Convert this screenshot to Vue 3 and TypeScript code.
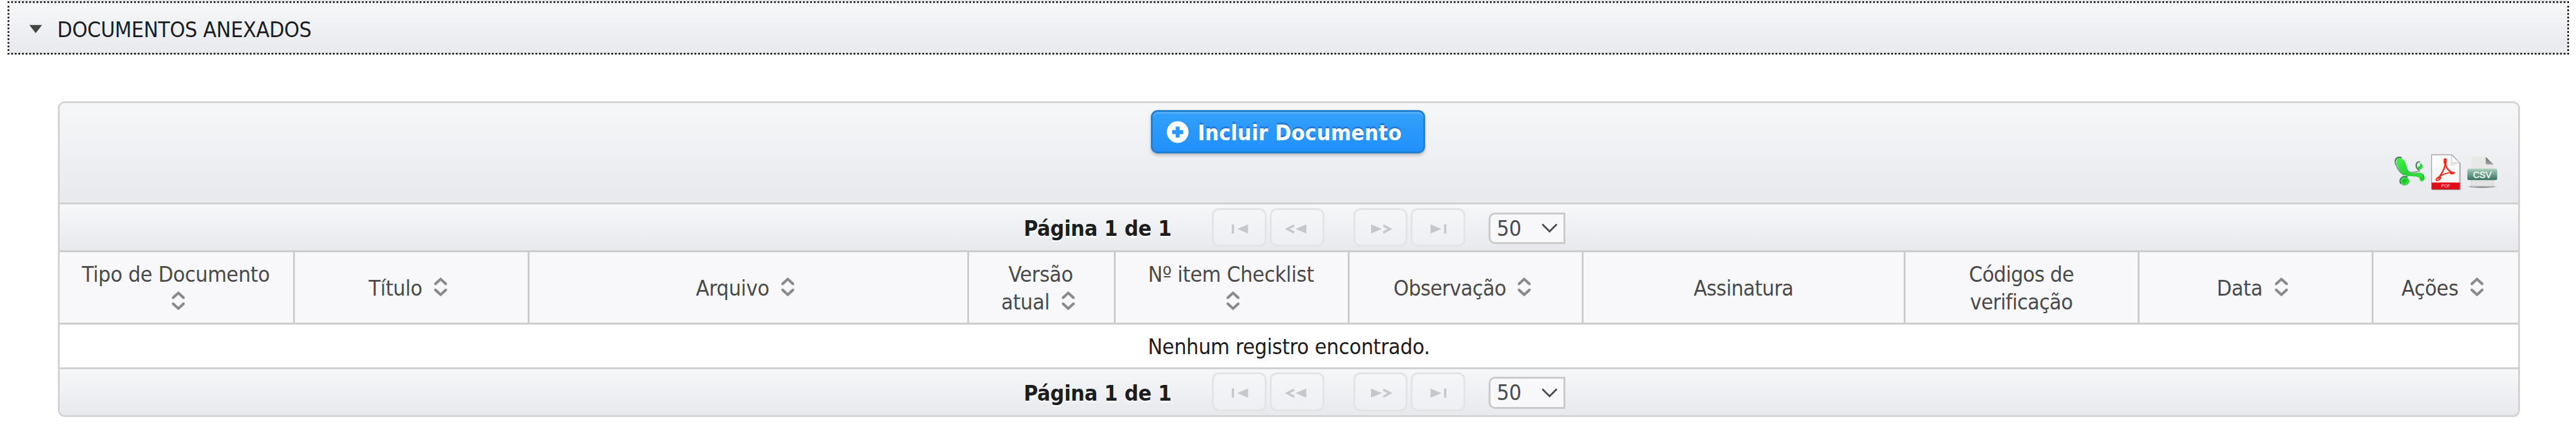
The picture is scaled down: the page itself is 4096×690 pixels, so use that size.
<script setup lang="ts">
interface Column {
  lines: string[]
  sortable: boolean
  width: number
  tight?: boolean
}

const columns: Column[] = [
  { lines: ['Tipo de Documento', ''], sortable: true, width: 520 },
  { lines: ['Título'], sortable: true, width: 520 },
  { lines: ['Arquivo'], sortable: true, width: 972 },
  { lines: ['Versão', 'atual'], sortable: true, width: 324 },
  { lines: ['Nº item Checklist', ''], sortable: true, width: 518 },
  { lines: ['Observação'], sortable: true, width: 518, tight: true },
  { lines: ['Assinatura'], sortable: false, width: 712, tight: true },
  { lines: ['Códigos de', 'verificação'], sortable: false, width: 518, tight: true },
  { lines: ['Data'], sortable: true, width: 518 },
  { lines: ['Ações'], sortable: true, width: 320 },
]

const columnTracks = columns.map((c) => `minmax(0, ${c.width}fr)`).join(' ')

const pagers = ['top', 'bottom']
</script>

<template>
  <div class="page">
    <div class="previous-panel"></div>
    <div class="panel-header">
      <svg class="caret" viewBox="0 0 30 20"><path d="M1 1H29L15 19Z" fill="#434343" /></svg>
      <span class="panel-title">DOCUMENTOS ANEXADOS</span>
      <svg class="focus-ring" viewBox="0 0 5668 118" preserveAspectRatio="none">
        <g stroke="#1c1c1c" stroke-width="4" stroke-dasharray="4 4" fill="none">
          <path d="M0 2H5668" />
          <path d="M0 116H5668" />
          <path d="M2 10V114" />
          <path d="M5666 10V114" />
        </g>
      </svg>
    </div>

    <div class="datatable">
      <div class="toolbar">
        <button class="include" type="button">
          <svg class="plus" viewBox="0 0 50 50">
            <path fill="#fff" fill-rule="evenodd" d="M25 0.5a24.5 24.5 0 1 1 0 49a24.5 24.5 0 1 1 0-49ZM20.5 12.5v8h-8v9h8v8h9v-8h8v-9h-8v-8Z" />
          </svg>
          <span>Incluir Documento</span>
        </button>
        <div class="exports">
          <svg viewBox="0 0 80 82">
            <defs>
              <linearGradient id="leaf" x1="0" y1="0" x2="1" y2="1">
                <stop offset="0" stop-color="#43f646" /><stop offset="0.5" stop-color="#27d034" /><stop offset="1" stop-color="#3bea4a" />
              </linearGradient>
            </defs>
            <g fill="none" stroke-linecap="round">
              <path d="M9 24C5 12 12 7 21 9" stroke="#3c7256" stroke-width="3" />
              <path d="M8 18C10 30 16 40 26 47" stroke="#6fa387" stroke-width="3" />
              <path d="M35 40C42 43 56 42 62 38" stroke="#8fa99a" stroke-width="3" />
              <path d="M60 36C51 31 53 19 61 18.5" stroke="#3f7d5b" stroke-width="3" />
              <path d="M34 52C21 49 16 59 20 66" stroke="#3f7d5b" stroke-width="3" />
              <path d="M21 66C25 72 34 71 38 64" stroke="#63b676" stroke-width="2" />
            </g>
            <path d="M12 12C20 8 28 13 31 22C34 32 35 40 43 43C51 45 60 41 66 43C73 46 75 57 70 61C65 64 60 60 62 55C56 49 44 51 35 50C24 49 17 39 13 28C10 20 10 15 12 12Z" fill="url(#leaf)" />
            <path d="M69 46C72 54 69 58 66 57C63 55 65 52 65 51" stroke="#189a35" stroke-width="1.5" fill="none" />
            <ellipse cx="29.5" cy="61" rx="9.5" ry="8.5" fill="url(#leaf)" />
            <circle cx="28" cy="60" r="4" fill="#1bbf2b" />
            <path d="M62 21C69 23 71 31 66 34.5C61 37 56 33 58 27C60 31 64 28 62 21Z" fill="url(#leaf)" />
          </svg>
          <svg viewBox="0 0 80 82">
            <defs>
              <linearGradient id="sheet" x1="0" y1="0" x2="0" y2="1">
                <stop offset="0" stop-color="#fff" /><stop offset="0.6" stop-color="#f6f6f6" /><stop offset="1" stop-color="#fff" />
              </linearGradient>
            </defs>
            <path d="M10 80.2H72.5V21" fill="none" stroke="#a7a7aa" stroke-width="1.4" />
            <path d="M9 3H54L71 21V79H9Z" fill="url(#sheet)" stroke="#98989a" stroke-width="1.6" />
            <path d="M52 8L50 22H68L58 26L50 27Z" fill="#e2e2e3" />
            <path d="M53 4V20.5H70.5Z" fill="#fdfdfd" stroke="#bcbcbe" stroke-width="1.3" />
            <g fill="none" stroke="#f12c1f" stroke-linecap="round" stroke-linejoin="round">
              <path d="M39 14V20" stroke-width="7" />
              <path d="M39 18C40 31 30 47 24 55" stroke-width="3.4" />
              <path d="M40 22C41 32 47 40 58 43" stroke-width="3.4" />
              <path d="M28 50C36 45 45 42 57 42" stroke-width="2.6" />
              <path d="M52 43.5L57.5 43" stroke-width="5.5" />
              <ellipse cx="24" cy="56" rx="5.5" ry="2.7" transform="rotate(-38 24 56)" stroke-width="3" />
            </g>
            <rect x="9" y="64.3" width="62.5" height="15" fill="#e30c18" />
            <path d="M9 79.3H71.5" stroke="#8e3a2c" stroke-width="1" />
            <text class="pdf-text" x="40.4" y="75.5">PDF</text>
          </svg>
          <svg viewBox="0 0 80 82">
            <defs>
              <linearGradient id="band" x1="0" y1="0" x2="0" y2="1">
                <stop offset="0" stop-color="#b3d6c2" /><stop offset="0.25" stop-color="#8ab9a5" /><stop offset="1" stop-color="#38705f" />
              </linearGradient>
              <linearGradient id="fold" x1="0" y1="0" x2="0" y2="1">
                <stop offset="0" stop-color="#6b6b6b" /><stop offset="1" stop-color="#a0a0a0" />
              </linearGradient>
              <radialGradient id="ground">
                <stop offset="0" stop-color="#6f6f72" /><stop offset="0.7" stop-color="#9a9a9d" /><stop offset="1" stop-color="#d5d6da" stop-opacity="0" />
              </radialGradient>
            </defs>
            <ellipse cx="40" cy="73.5" rx="36" ry="3.2" fill="url(#ground)" />
            <path d="M19 7H48L65 24V70Q65 73 62 73H18.5Q15.5 73 15.5 70V10.5Q15.5 7 19 7Z" fill="#e8e8e7" />
            <path d="M16 59H64.5V69Q64.5 72 62 72H18.5Q16 72 16 69Z" fill="#e3e3e4" stroke="#c7c7c9" stroke-width="1" />
            <path d="M48 7.5L65.5 24.5H51Q48 24.5 48 21.5Z" fill="url(#fold)" />
            <rect x="7.3" y="33.3" width="66" height="25.5" rx="4" fill="url(#band)" />
            <text class="csv-text" x="40.3" y="54">CSV</text>
          </svg>
        </div>
      </div>

      <template v-for="place in pagers" :key="place">
        <div class="pager">
          <span class="current">Página 1 de 1</span>
          <span class="nav">
            <svg viewBox="0 0 120 86"><path d="M44 36h5v20h-5ZM80 36v20L56 46Z" /></svg>
          </span>
          <span class="nav">
            <svg viewBox="0 0 120 86"><path d="M81 36v20L57 46Z" /><path class="stroke" d="M54 38L39 46L54 54" /></svg>
          </span>
          <span class="nav forward">
            <svg viewBox="0 0 120 86"><path d="M39 36v20L63 46Z" /><path class="stroke" d="M66 38L81 46L66 54" /></svg>
          </span>
          <span class="nav">
            <svg viewBox="0 0 120 86"><path d="M44 36v20L68 46ZM74 36h5v20h-5Z" /></svg>
          </span>
          <span class="rows-select">
            <span>50</span>
            <svg viewBox="0 0 36 22"><path d="M2 2L18 18L34 2" fill="none" stroke="#494949" stroke-width="4" /></svg>
          </span>
        </div>

        <template v-if="place === 'top'">
          <div class="head" :style="{ gridTemplateColumns: columnTracks }">
            <div v-for="col in columns" :key="col.lines[0]" class="cell" :class="{ tight: col.tight, sortable: col.sortable }">
              <div v-for="(line, i) in col.lines" :key="i" class="line">
                <span v-if="line">{{ line }}</span>
                <svg v-if="col.sortable && i === col.lines.length - 1" class="sort" :class="{ after: line }" viewBox="0 0 64 62">
                  <path d="M37 7L51 19.5V24H47L37 14.5L27 24H23V19.5ZM37 49L51 36.500V32H47L37 41.500L27 32H23V36.500Z" fill="#8a8a8b" />
                </svg>
              </div>
            </div>
          </div>
          <div class="empty">Nenhum registro encontrado.</div>
        </template>
      </template>
    </div>
  </div>
</template>

<style>
body {
  margin: 0;
  background: #fff;
}
</style>

<style scoped>
.page {
  --u: calc(100vw / 5700);
  box-sizing: border-box;
  width: 100vw;
  height: calc(960 * var(--u));
  overflow: hidden;
  background: #fff;
  color: #1c1d1e;
  font-family: "DejaVu Sans Condensed", "DejaVu Sans", sans-serif;
  font-stretch: condensed;
  font-size: calc(48 * var(--u));
  line-height: calc(62 * var(--u));
  letter-spacing: calc(-0.4 * var(--u));
  white-space: nowrap;
}
.page * {
  box-sizing: border-box;
}
svg {
  display: block;
  flex: none;
}
.previous-panel {
  height: calc(4 * var(--u));
  margin: 0 calc(18 * var(--u)) 0 calc(22 * var(--u));
  background: #e5e6ea;
  border-radius: 0 0 calc(10 * var(--u)) calc(10 * var(--u));
}
.panel-header {
  position: relative;
  display: flex;
  align-items: center;
  height: calc(118 * var(--u));
  margin: 0 calc(14 * var(--u)) 0 calc(18 * var(--u));
  padding: 0 calc(43 * var(--u));
  border: calc(4 * var(--u)) solid transparent;
  border-radius: calc(18 * var(--u)) calc(18 * var(--u)) 0 0;
  background: linear-gradient(#f6f7f9, #e8e9ed) padding-box;
}
.focus-ring {
  position: absolute;
  top: calc(-3.5 * var(--u));
  left: calc(-3.5 * var(--u));
  width: calc(5668 * var(--u));
  height: calc(118 * var(--u));
}
.caret {
  width: calc(30 * var(--u));
  height: calc(20 * var(--u));
  margin-top: calc(2 * var(--u));
}
.panel-title {
  margin-left: calc(33 * var(--u));
  padding-top: calc(5 * var(--u));
}
.datatable {
  height: calc(698 * var(--u));
  margin: calc(102 * var(--u)) calc(124 * var(--u)) 0 calc(128 * var(--u));
  border: 3px solid #d3d3d4;
  border-radius: calc(16 * var(--u));
  overflow: hidden;
}
.toolbar {
  display: flex;
  flex-direction: column;
  height: calc(220 * var(--u));
  padding: calc(16 * var(--u)) calc(40 * var(--u)) calc(28 * var(--u)) calc(36 * var(--u));
  background: linear-gradient(#f6f7f9, #e8e9ed);
}
.include {
  display: flex;
  align-items: center;
  align-self: center;
  width: calc(608 * var(--u));
  height: calc(96 * var(--u));
  flex: none;
  margin: 0;
  padding: 0 0 0 calc(31 * var(--u));
  border: 3px solid #2380d0;
  border-radius: calc(15 * var(--u));
  background: linear-gradient(#33a1fb, #2190fb);
  box-shadow: inset 0 3px 0 #51b1fd, 0 calc(4 * var(--u)) calc(8 * var(--u)) rgba(0, 0, 0, 0.22);
  color: #fff;
  font-family: inherit;
  font-size: inherit;
  font-stretch: condensed;
  font-weight: bold;
  line-height: calc(62 * var(--u));
  letter-spacing: calc(0.3 * var(--u));
  text-shadow: 0 calc(-4 * var(--u)) 0 #2477d8;
}
.include span {
  margin-left: calc(20 * var(--u));
  padding-top: calc(3 * var(--u));
}
.plus {
  width: calc(49 * var(--u));
  height: calc(50 * var(--u));
}
.exports {
  display: flex;
  align-self: flex-end;
  margin-top: auto;
}
.exports svg {
  width: calc(80 * var(--u));
  height: calc(82 * var(--u));
}
.pdf-text {
  fill: #ffd9da;
  font: 10px "Liberation Sans", sans-serif;
  letter-spacing: 0;
  text-anchor: middle;
}
.csv-text {
  fill: #f3f8f5;
  stroke: #f3f8f5;
  stroke-width: 0.6px;
  font: 20px "Liberation Sans", sans-serif;
  letter-spacing: 0;
  text-anchor: middle;
}
.pager {
  display: flex;
  align-items: center;
  height: calc(106 * var(--u));
  padding-left: calc(2133 * var(--u));
  border-top: 3px solid #d0d0d1;
  background: linear-gradient(#f6f7f9, #e8e9ed);
}
.current {
  width: calc(417 * var(--u));
  padding-top: calc(5 * var(--u));
  font-weight: bold;
  letter-spacing: calc(-0.25 * var(--u));
  text-shadow: 0 calc(4 * var(--u)) 0 #fafafb;
}
.nav {
  display: flex;
  align-items: center;
  justify-content: center;
  width: calc(120 * var(--u));
  height: calc(86 * var(--u));
  margin-right: calc(8 * var(--u));
  border: 3px solid #e3e4e5;
  border-radius: calc(16 * var(--u));
  background: linear-gradient(#f5f6f8, #eeeff3);
}
.nav svg {
  width: calc(120 * var(--u));
  height: calc(86 * var(--u));
  fill: #c6c7c9;
}
.nav .stroke {
  fill: none;
  stroke: #c6c7c9;
  stroke-width: 5px;
}
.forward {
  margin-left: calc(56 * var(--u));
}
.rows-select {
  display: flex;
  align-items: center;
  justify-content: space-between;
  width: calc(170 * var(--u));
  height: calc(70 * var(--u));
  margin-left: calc(44 * var(--u));
  margin-top: calc(4 * var(--u));
  padding: 0 calc(13 * var(--u)) 0 calc(14 * var(--u));
  border: 3px solid #cacacb;
  border-radius: calc(14 * var(--u)) 0 0 calc(14 * var(--u));
  background: #f8f8fa;
  color: #4a4a4a;
}
.rows-select svg {
  width: calc(36 * var(--u));
  height: calc(22 * var(--u));
}
.head {
  display: grid;
  height: calc(160 * var(--u));
  border-top: 3px solid #cccccd;
  background: #f8f8fb;
  color: #4a4a4a;
}
.cell {
  display: flex;
  flex-direction: column;
  align-items: center;
  justify-content: center;
  min-width: 0;
  padding-top: calc(3 * var(--u));
  border-right: 3px solid #cccccd;
}
.cell.sortable {
  padding-right: calc(2 * var(--u));
}
.cell:last-child {
  border-right: 0;
}
.tight {
  letter-spacing: calc(-0.8 * var(--u));
}
.line {
  display: flex;
  align-items: center;
  height: calc(62 * var(--u));
}
.sort {
  width: calc(64 * var(--u));
  height: calc(62 * var(--u));
}
.after {
  margin-left: calc(4 * var(--u));
}
.empty {
  display: flex;
  align-items: center;
  justify-content: center;
  height: calc(98 * var(--u));
  padding-top: calc(5 * var(--u));
  border-top: 3px solid #cccccd;
  background: #fff;
  color: #1c1c1c;
}
</style>
